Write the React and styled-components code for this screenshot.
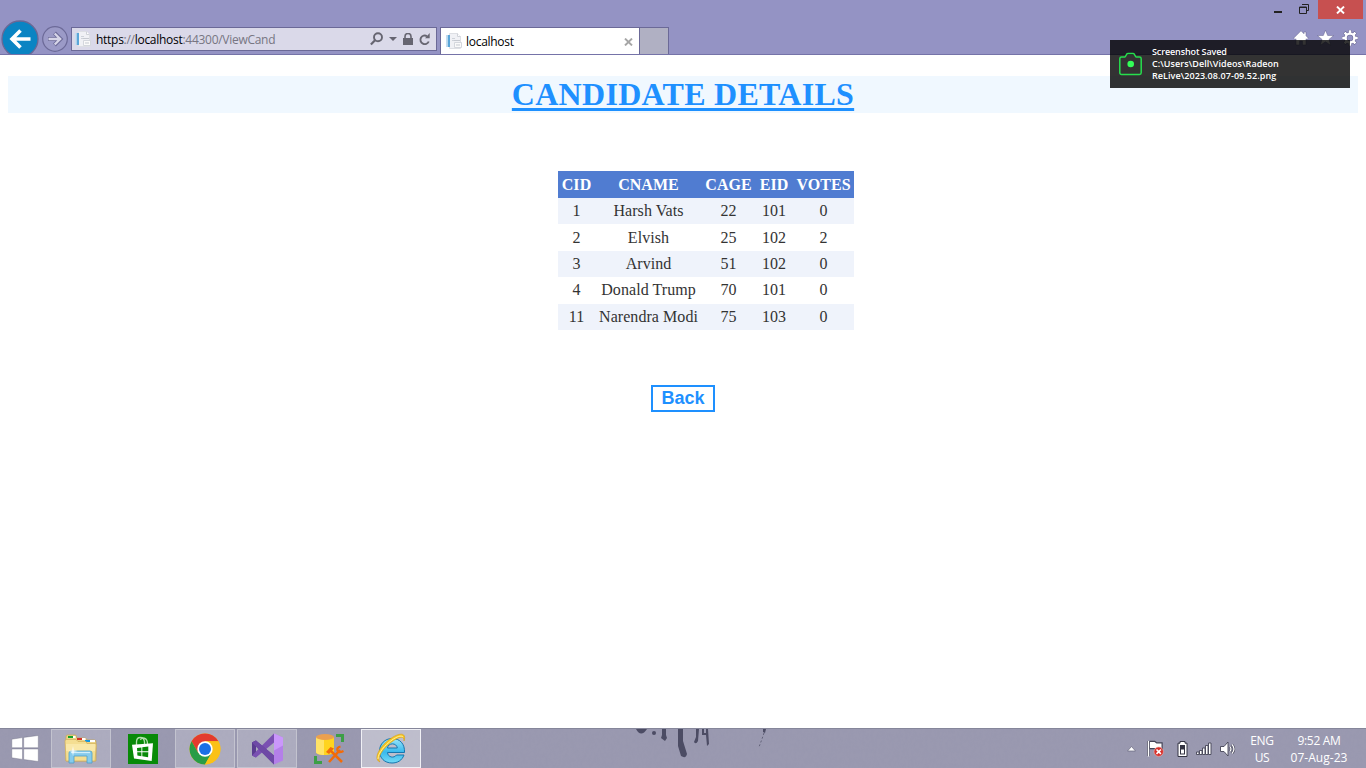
import React from "react";
import styled, { createGlobalStyle } from "styled-components";

const Global = createGlobalStyle`
  * { box-sizing: border-box; }
  html, body { margin: 0; padding: 0; background: #fff; overflow: hidden; }
`;

const Screen = styled.div`
  position: relative;
  width: 1366px;
  height: 768px;
  display: flex;
  flex-direction: column;
  overflow: hidden;
  font-family: "Open Sans", "Noto Sans", sans-serif;
  svg { display: block; flex: none; }
`;

/* Browser chrome */
const Chrome = styled.header`
  flex: none;
  height: 55px;
  display: flex;
  justify-content: space-between;
  background: #9493c4;
  border-bottom: 1px solid #7573a8;
  overflow: hidden;
`;
const Navigation = styled.div`
  display: flex;
  align-items: flex-start;
  padding-top: 27px;
`;
const NavButton = styled.div`
  width: ${(p) => p.$size}px;
  height: ${(p) => p.$size}px;
  margin: ${(p) => p.$margin};
`;
const AddressBar = styled.div`
  width: 366px;
  height: 24px;
  display: flex;
  align-items: center;
  background: #dad9e9;
  border: 1px solid #6b6997;
  padding: 0 5px 0 3px;
`;
const Url = styled.span`
  flex: 1;
  padding-top: 2px;
  margin-left: 5px;
  font-size: 12px;
  line-height: 20px;
  letter-spacing: -0.28px;
  color: #777682;
  white-space: nowrap;
  b { font-weight: 400; color: #000; }
`;
const BarIcons = styled.div`
  display: flex;
  align-items: center;
  gap: 6px;
`;
const Tab = styled.div`
  width: 200px;
  height: 27px;
  margin-left: 3px;
  display: flex;
  align-items: center;
  background: #fff;
  border: 1px solid #6b6997;
  border-bottom: 0;
  padding: 1px 6px 0 5px;
`;
const TabTitle = styled.span`
  flex: 1;
  margin-left: 4px;
  font-size: 12px;
  letter-spacing: -0.28px;
  color: #000;
`;
const NewTab = styled.div`
  width: 29px;
  height: 27px;
  background: #b0b0c3;
  border: 1px solid #6b6997;
  border-width: 1px 1px 0 0;
`;
const WindowSide = styled.div`
  display: flex;
  flex-direction: column;
  align-items: flex-end;
`;
const WindowControls = styled.div`
  display: flex;
  height: 19px;
  padding-right: 3px;
`;
const CloseButton = styled.div`
  width: 45px;
  height: 19px;
  background: #c75050;
  display: flex;
  align-items: center;
  justify-content: center;
`;
const Tools = styled.div`
  display: flex;
  gap: 8px;
  padding: 11px 8px 0 0;
`;

/* Screen capture notification */
const Toast = styled.aside`
  position: absolute;
  left: 1110px;
  top: 40px;
  width: 240px;
  height: 48px;
  display: flex;
  align-items: center;
  padding-left: 9px;
  background: rgba(0, 0, 0, 0.8);
`;
const ToastText = styled.div`
  margin-left: 9px;
  font-size: 9px;
  font-weight: 600;
  line-height: 12px;
  letter-spacing: 0.06px;
  color: #fff;
  white-space: nowrap;
`;
const ToastTitle = styled.div`
  letter-spacing: -0.12px;
`;

/* Web page */
const Page = styled.main`
  flex: 1;
  display: flex;
  flex-direction: column;
  align-items: center;
  padding: 21px 8px 0;
  background: #fff;
  font-family: "Liberation Serif", serif;
`;
const Heading = styled.h1`
  align-self: stretch;
  margin: 0;
  height: 37px;
  line-height: 37px;
  font-size: 32px;
  letter-spacing: 0.28px;
  text-align: center;
  color: #1e90ff;
  background: #f0f8ff;
  text-decoration: underline;
  text-decoration-thickness: 3px;
  text-decoration-skip-ink: none;
  text-underline-offset: 3px;
`;
const Grid = styled.table`
  margin: 58px 0 0 46px;
  width: 296px;
  table-layout: fixed;
  border-collapse: collapse;
  font-size: 16px;
  text-align: center;
  color: #333;
`;
const HeadCell = styled.th`
  width: ${(p) => p.$width}px;
  height: 27px;
  padding: 0;
  background: #507cd1;
  color: #fff;
  letter-spacing: 0.05px;
`;
const Row = styled.tr`
  background: ${(p) => (p.$shaded ? "#eff3fb" : "#fff")};
`;
const Cell = styled.td`
  height: 26.4px;
  padding: 0;
  white-space: nowrap;
  letter-spacing: 0.06px;
`;
const BackButton = styled.button`
  margin-top: 55px;
  width: 64px;
  height: 27px;
  padding: 0;
  border: 2px solid #1e90ff;
  background: #fff;
  color: #1e90ff;
  font: bold 18px/22px "Liberation Sans", sans-serif;
`;

/* Taskbar */
const Taskbar = styled.footer`
  position: relative;
  flex: none;
  height: 40px;
  display: flex;
  justify-content: space-between;
  background: #9a99b0;
  border-top: 1px solid #85869a;
`;
const Wallpaper = styled.svg`
  position: absolute;
  inset: 0;
`;
const Apps = styled.div`
  position: relative;
  display: flex;
  gap: 2px;
`;
const AppButton = styled.div`
  width: 60px;
  height: 39px;
  display: flex;
  align-items: center;
  justify-content: center;
  border: 1px solid ${(p) => (p.$state === "active" ? "#f0f0f5" : p.$state === "open" ? "#c3c3cf" : "transparent")};
  background: ${(p) => (p.$state === "active" ? "rgba(255,255,255,.36)" : p.$state === "open" ? "rgba(255,255,255,.19)" : "transparent")};
`;
const StartButton = styled.div`
  width: 49px;
  display: flex;
  align-items: center;
  padding-left: 11px;
`;
const Tray = styled.div`
  position: relative;
  display: flex;
  align-items: center;
  padding-right: 14px;
  color: #fff;
`;
const TrayText = styled.div`
  width: ${(p) => p.$width}px;
  font-size: 12px;
  line-height: 17px;
  text-align: center;
  letter-spacing: -0.3px;
  white-space: nowrap;
`;
const TrayDate = styled.div`
  letter-spacing: 0.02px;
`;

const PageIcon = () => (
  <svg width="16" height="17" viewBox="0 0 16 17">
    <path d="M3.500.5h8l3 3v12h-11z" fill="#f0f1f5" stroke="#dddfe4" />
    <path d="M11.500.5v3h3" fill="#fff" stroke="#cfd2d8" />
    <path d="M6 5.500h3M6 7.500h3" stroke="#ced2d9" />
    <path d="M8.500 9.500h7v5h-7z" fill="#fafafa" stroke="#d4d7dd" />
    <path d="M8 7.500h6M10 12h4" stroke="#c5c9d0" />
    <path d="M1.500 2h2.500v12H1.500z" fill="#5aa6d8" />
    <path d="M0 2h1.500v12H0z" fill="#c5def0" />
  </svg>
);

const BackIcon = () => (
  <svg width="38" height="38" viewBox="0 0 38 38">
    <circle cx="19" cy="19" r="18" fill="#0a84c3" stroke="#696896" strokeWidth="1.300" />
    <path d="M29.500 19H12M19.500 10.500 11 19l8.500 8.500" fill="none" stroke="#fff" strokeWidth="3.600" />
  </svg>
);
const ForwardIcon = () => (
  <svg width="26" height="26" viewBox="0 0 26 26">
    <circle cx="13" cy="13" r="12.300" fill="#9b9ac7" stroke="#6c6a98" strokeWidth="1.200" />
    <path d="M6 13h12M12.500 7l6 6-6 6" fill="none" stroke="#6c6a98" strokeWidth="4" />
    <path d="M6.500 13h11M12.700 7.500l5.500 5.500-5.500 5.500" fill="none" stroke="#d6d5e8" strokeWidth="2.300" />
  </svg>
);
const SearchIcon = () => (
  <svg width="13" height="14" viewBox="0 0 13 14">
    <circle cx="8" cy="5.300" r="4" fill="none" stroke="#666571" strokeWidth="1.900" />
    <path d="M5 8.200.9 12.500" stroke="#666571" strokeWidth="2.200" />
  </svg>
);
const ChevronIcon = () => <svg width="8" height="4" viewBox="0 0 8 4"><path d="M0 0h8L4 4z" fill="#666571" /></svg>;
const LockIcon = () => (
  <svg width="10" height="12" viewBox="0 0 10 12">
    <path d="M0 5h10v7H0z" fill="#666571" />
    <path d="M2 6V3.500a3 3 0 0 1 6 0V6" fill="none" stroke="#666571" strokeWidth="1.600" />
  </svg>
);
const ReloadIcon = () => (
  <svg width="12" height="13" viewBox="0 0 12 13">
    <path d="M8 3.200A4.300 4.300 0 1 0 9.700 8.500" fill="none" stroke="#666571" strokeWidth="1.900" />
    <path d="M6 5.200h4.700V0z" fill="#666571" />
  </svg>
);
const TabCloseIcon = () => (
  <svg width="9" height="8" viewBox="0 0 9 8"><path d="m1 .6 7 6.800M8 .6 1 7.400" stroke="#a6a6a6" strokeWidth="2" /></svg>
);
const MinMaxIcon = () => (
  <svg width="44" height="19" viewBox="0 0 44 19">
    <path d="M0 11h8v2H0z" fill="#222" />
    <path d="M28 4.500h6.500v6H33" fill="none" stroke="#222" />
    <path d="M25.500 7h7v6.500h-7zM25 7.500h8" fill="none" stroke="#222" />
  </svg>
);
const CloseIcon = () => (
  <svg width="9" height="8" viewBox="0 0 9 8"><path d="m1 .6 7 6.800M8 .6 1 7.400" stroke="#fff" strokeWidth="2" /></svg>
);
const HomeIcon = () => (
  <svg width="16" height="16" viewBox="0 0 16 16">
    <path d="M8 .8.6 8.200l1.500 1.300L3 8.800V15h3.600v-4h2.800v4H13V8.800l.9.700 1.500-1.300L13 5.800V2h-2v1.800z" fill="#fff" stroke="#65638f" strokeWidth=".5" />
  </svg>
);
const StarIcon = () => (
  <svg width="17" height="16" viewBox="0 0 17 16">
    <path d="m8.500.2 2.200 5.300h6l-4.700 3.900 1.800 6-5.300-3.600-5.300 3.600 1.800-6L.3 5.500h6z" fill="#fff" stroke="#65638f" strokeWidth=".5" />
  </svg>
);
const GearIcon = () => (
  <svg width="16" height="16" viewBox="0 0 16 16">
    {["#65638f", "#fff"].map((c, n) => (
      <g key={c} stroke={c} fill="none">
        <circle cx="8" cy="8" r="4.400" strokeWidth={n ? 2.400 : 3.400} />
        {[0, 45, 90, 135].map((a) => (
          <path key={a} d={n ? "M8 .3v3M8 12.700v3" : "M8 0v4M8 12v4"} strokeWidth={n ? 2.500 : 3.500} transform={`rotate(${a} 8 8)`} />
        ))}
      </g>
    ))}
  </svg>
);
const CameraIcon = () => (
  <svg width="24" height="24" viewBox="0 0 24 24">
    <path d="M2.500 5h3.300c1.200 0 1.200-3.500 3-3.500h5.400c1.800 0 1.800 3.500 3 3.500h3.300c1 0 1.700.7 1.700 1.700v14c0 1-.7 1.700-1.700 1.700h-18c-1 0-1.700-.7-1.700-1.700v-14C.8 5.700 1.500 5 2.500 5z" fill="none" stroke="#26df4d" strokeWidth="1.500" />
    <circle cx="11.700" cy="12" r="3.300" fill="#33ff58" />
  </svg>
);

const WindowsIcon = () => (
  <svg width="28" height="27" viewBox="0 0 28 27">
    <path d="M.8 4.200 11.500 2.600V12.700H.8zM12.700 2.400 27.300.5V12.700H12.700zM.8 14h10.700v10.400L.8 22.800zM12.700 14h14.600v12.500l-14.600-2z" fill="#fff" stroke="#6f6e83" strokeWidth=".4" />
  </svg>
);
const FolderIcon = () => (
  <svg width="34" height="30" viewBox="0 0 34 30">
    <path d="M2 3q0-2 1.500-2H11q1.500 0 1.500 2v1H21q1.500 0 1.500 2h8q1.500 0 1.500 2v19H2z" fill="#ecd488" stroke="#c9a650" strokeWidth=".7" />
    <path d="M4 2h6v2H4z" fill="#15a22b" /><path d="M9 2h2.500v2H9zM18 4h3.500v2H18zM26 6h5v2h-5z" fill="#fff" />
    <path d="M13 4h5v2h-5z" fill="#d53424" /><path d="M21 6h5v2h-5z" fill="#1596df" />
    <path d="M1 7q0-1.500 1.500-1.500H12l2 2h8l1 2h8q1.500 0 1.300 1.500L31 27H2z" fill="#f4de92" stroke="#d3b05a" strokeWidth=".7" />
    <path d="M2 10h29v7H2z" fill="#fbeeb9" opacity=".6" />
    <path d="M5 29V19q0-2 2-2h19q2 0 2 2v10h-5v-7H10v7z" fill="#86cbec" stroke="#4b9fc9" strokeWidth=".8" />
    <path d="M7 18.500h19" stroke="#d2effb" strokeWidth="1.300" />
    <path d="m9 12 .8 4.200L14 17l-4.200.8L9 22l-.8-4.200L4 17l4.200-.8z" fill="#fff" opacity=".85" />
  </svg>
);
const StoreIcon = () => (
  <svg width="30" height="30" viewBox="0 0 30 30">
    <path d="M0 0h30v30H0z" fill="#088a08" />
    <path d="M8.500 11V8c0-6 7.500-6 8 0v2M12.500 6c1-3.500 7-3 7 4" fill="none" stroke="#b4dfad" strokeWidth="1.300" />
    <path d="M4 10.800 25 9.300 23.700 27 6 24.500z" fill="#fff" />
    <path d="m9 14 4.400-.6v3.900H9.200zM14.300 13.300l6-.8v4.800h-6zM9.200 18.200h4.200v4l-4-.6zM14.300 18.200h6l-.2 5-5.800-.9z" fill="#088a08" />
  </svg>
);
const ChromeIcon = () => (
  <svg width="32" height="32" viewBox="0 0 32 32">
    <circle cx="16" cy="16" r="15.500" fill="#fbc116" />
    <path d="M2.580 8.250A15.500 15.500 0 0 1 29.420 8.250H16L9.300 19.900z" fill="#e33b2e" />
    <path d="M2.580 8.250A15.500 15.500 0 0 0 16 31.500l6.700-11.700L9.300 19.900z" fill="#299c46" />
    <path d="M16 31.500A15.500 15.500 0 0 0 29.420 8.250H16l6.700 11.600z" fill="#fbc116" />
    <circle cx="16" cy="16" r="7.700" fill="#fff" />
    <circle cx="16" cy="16" r="6" fill="#1a6fe4" />
  </svg>
);
const StudioIcon = () => (
  <svg width="33" height="32" viewBox="0 0 33 32">
    <path d="M1 9.500 5 7.500V24.500L1 22.500z" fill="#5a3c90" />
    <path d="m1 22.500 4 2L23 9.500V.5z" fill="#7a50b2" />
    <path d="m5 7.500 18 15v9L1 9.500z" fill="#64449b" />
    <path d="m1 9.500 4-2 18 15v9z" fill="#6e49a6" />
    <path d="m23 .5 9 4v23l-9 4z" fill="#b47fe9" />
    <path d="m23 .5 9 4v8l-9 5z" fill="#ca97fb" />
  </svg>
);
const DatabaseIcon = () => (
  <svg width="32" height="32" viewBox="0 0 32 32">
    <path d="M23 1h8v8h-3V4h-5zM1 23h3v5h5v3H1z" fill="#3c9f46" />
    <path d="M3 4v15c0 4 18 4 18 0V4z" fill="#ffd41f" />
    <path d="M3 4v15c0 2 4 3 8 3V7z" fill="#ffe367" />
    <ellipse cx="12" cy="4" rx="9" ry="3" fill="#eba04f" />
    <path d="m16 29 11-12M17 17l12 12" stroke="#f36b08" strokeWidth="2.500" />
    <path d="m13 19 4.500-5 3.500 1.500L16 21z" fill="#f36b08" />
    <path d="M27.500 13.500q-4 1-3 4t6 .5" fill="none" stroke="#f36b08" strokeWidth="2.300" />
  </svg>
);
const ExplorerIcon = () => (
  <svg width="32" height="32" viewBox="0 0 32 32">
    <defs><linearGradient id="ie" x2="0" y2="1"><stop stopColor="#9be6fb" /><stop offset=".55" stopColor="#38b9ee" /><stop offset="1" stopColor="#74daf6" /></linearGradient></defs>
    <path d="M29.500 19.500H12.500c.4 5 6.500 6 9 2.500h7.500C27 27.500 22.500 30 17 30 9.500 30 4.500 25 4.500 18S10 5.500 17 5.500c8 0 13 5.500 12.500 14zM12.500 15h9.800c-.5-5.500-9.300-5.500-9.800 0z" fill="url(#ie)" stroke="#1676ae" strokeWidth="1" />
    <path d="M5 29c-8-3 1-17 10-23C24-.5 32-1 29 8c.3-6-5-4-11 0C9 14 1 25 5 29z" fill="#f7c723" stroke="#d99d13" strokeWidth=".6" />
    <path d="M3 26c0-6 7-14 14-19 5-3.500 9-5 11-3" fill="none" stroke="#fff19a" strokeWidth="1" />
  </svg>
);
const TrayIcons = () => (
  <svg width="112" height="20" viewBox="0 0 112 20">
    <path d="M1.500 12 5.500 7.500l4 4.500z" fill="#fff" stroke="#65657b" strokeWidth=".7" />
    <g stroke="#444456" strokeWidth="2.400" fill="#444456"><path d="M22.500 2v15M23.500 3h5l2 1.500h5v6h-5l-2-1.500h-5" /></g>
    <path d="M22.500 2v15.500" stroke="#fff" strokeWidth="1.300" /><path d="M24 3h4.500l2 1.500h5v6h-5l-2-1.500H24z" fill="#fff" />
    <circle cx="32.700" cy="12.700" r="4.700" fill="#d7302b" stroke="#efb4b0" strokeWidth=".6" />
    <path d="m30.500 10.500 4.400 4.400m0-4.400-4.400 4.400" stroke="#fff" strokeWidth="1.600" />
    <path d="M54 4.200V2.500h5v1.700h2v13.300h-9V4.200z" fill="#fff" stroke="#333342" />
    <path d="M54 6h5v9.500h-5z" fill="#333342" /><path d="M55 10.500h3v4h-3z" fill="#fff" />
    <g fill="#fff" stroke="#444456" strokeWidth=".9">
      <path d="M70.500 13h2.500v2.500h-2.500zM73.500 11.500h2.500v4h-2.500zM76.500 9h2.500v6.500h-2.500zM79.500 6.500h2.500v9h-2.500zM82.500 4h2.500v11.500h-2.500z" />
      <path d="M94.500 7.500H98l4-4.500v14l-4-4.500h-3.500z" />
    </g>
    <g fill="none" stroke="#444456" strokeWidth="2.400"><path d="M104 7.500q2 2.500 0 5M106 5.500q4 4.500 0 9" /></g>
    <g fill="none" stroke="#fff" strokeWidth="1.200"><path d="M104 7.500q2 2.500 0 5M106 5.500q4 4.500 0 9" /></g>
  </svg>
);

const columns = [["CID", 37], ["CNAME", 107], ["CAGE", 53], ["EID", 38], ["VOTES", 61]];
const candidates = [
  [1, "Harsh Vats", 22, 101, 0],
  [2, "Elvish", 25, 102, 2],
  [3, "Arvind", 51, 102, 0],
  [4, "Donald Trump", 70, 101, 0],
  [11, "Narendra Modi", 75, 103, 0],
];
const apps = [
  [FolderIcon, "open"],
  [StoreIcon, "pinned"],
  [ChromeIcon, "open"],
  [StudioIcon, "open"],
  [DatabaseIcon, "pinned"],
  [ExplorerIcon, "active"],
];

export default function App() {
  return (
    <Screen>
      <Global />
      <Chrome>
        <Navigation>
          <NavButton $size={38} $margin="-7px 0 0 1px"><BackIcon /></NavButton>
          <NavButton $size={26} $margin="-1px 3px 0 3px"><ForwardIcon /></NavButton>
          <AddressBar>
            <PageIcon />
            <Url>
              <b>https</b>://<b>localhost</b>:44300/ViewCand
            </Url>
            <BarIcons>
              <SearchIcon />
              <ChevronIcon />
              <LockIcon />
              <ReloadIcon />
            </BarIcons>
          </AddressBar>
          <Tab>
            <PageIcon />
            <TabTitle>localhost</TabTitle>
            <TabCloseIcon />
          </Tab>
          <NewTab />
        </Navigation>
        <WindowSide>
          <WindowControls>
            <MinMaxIcon />
            <CloseButton><CloseIcon /></CloseButton>
          </WindowControls>
          <Tools>
            <HomeIcon />
            <StarIcon />
            <GearIcon />
          </Tools>
        </WindowSide>
      </Chrome>

      <Page>
        <Heading>CANDIDATE DETAILS</Heading>
        <Grid>
          <thead>
            <tr>
              {columns.map(([name, width]) => (
                <HeadCell key={name} $width={width}>{name}</HeadCell>
              ))}
            </tr>
          </thead>
          <tbody>
            {candidates.map((c, i) => (
              <Row key={c[0]} $shaded={i % 2 === 0}>
                {c.map((value, j) => <Cell key={j}>{value}</Cell>)}
              </Row>
            ))}
          </tbody>
        </Grid>
        <BackButton>Back</BackButton>
      </Page>

      <Taskbar>
        <Wallpaper width="1366" height="39" viewBox="0 0 1366 39">
          <filter id="grain" x="0" y="0" width="100%" height="100%">
            <feTurbulence type="fractalNoise" baseFrequency=".35 .2" numOctaves="3" seed="4" />
            <feColorMatrix values="0 0 0 0 .3  0 0 0 0 .3  0 0 0 0 .42  1.2 0 0 0 -.45" />
          </filter>
          <rect width="1366" height="39" filter="url(#grain)" opacity=".55" />
          <g fill="#4c4c64">
            <path d="M636 0q5 9 11 0z" />
            <circle cx="654" cy="4" r="2" />
            <path d="M662 0h4v6l1 3-2 3-4-3 1-3z" />
            <path d="M678 0h5v12l4 13q-1 5-6 2l-3-10z" />
            <path d="M696 0h3l-1 12q-2 4-4 1l2-5zM702 0h2v4h2V0h2l1 15-2 2-1-11h-4z" />
            <path d="M763 0h3l-1 4-2-1z" />
          </g>
          <path d="m764 4-2 6-3 8" fill="none" stroke="#626279" strokeDasharray="2 2" />
        </Wallpaper>
        <Apps>
          <StartButton><WindowsIcon /></StartButton>
          {apps.map(([Icon, state], i) => (
            <AppButton key={i} $state={state}><Icon /></AppButton>
          ))}
        </Apps>
        <Tray>
          <TrayIcons />
          <TrayText $width={48}>ENG<br />US</TrayText>
          <TrayText $width={66}>9:52 AM<TrayDate>07-Aug-23</TrayDate></TrayText>
        </Tray>
      </Taskbar>

      <Toast>
        <CameraIcon />
        <ToastText>
          <ToastTitle>Screenshot Saved</ToastTitle>
          C:\Users\Dell\Videos\Radeon<br />
          ReLive\2023.08.07-09.52.png
        </ToastText>
      </Toast>
    </Screen>
  );
}
